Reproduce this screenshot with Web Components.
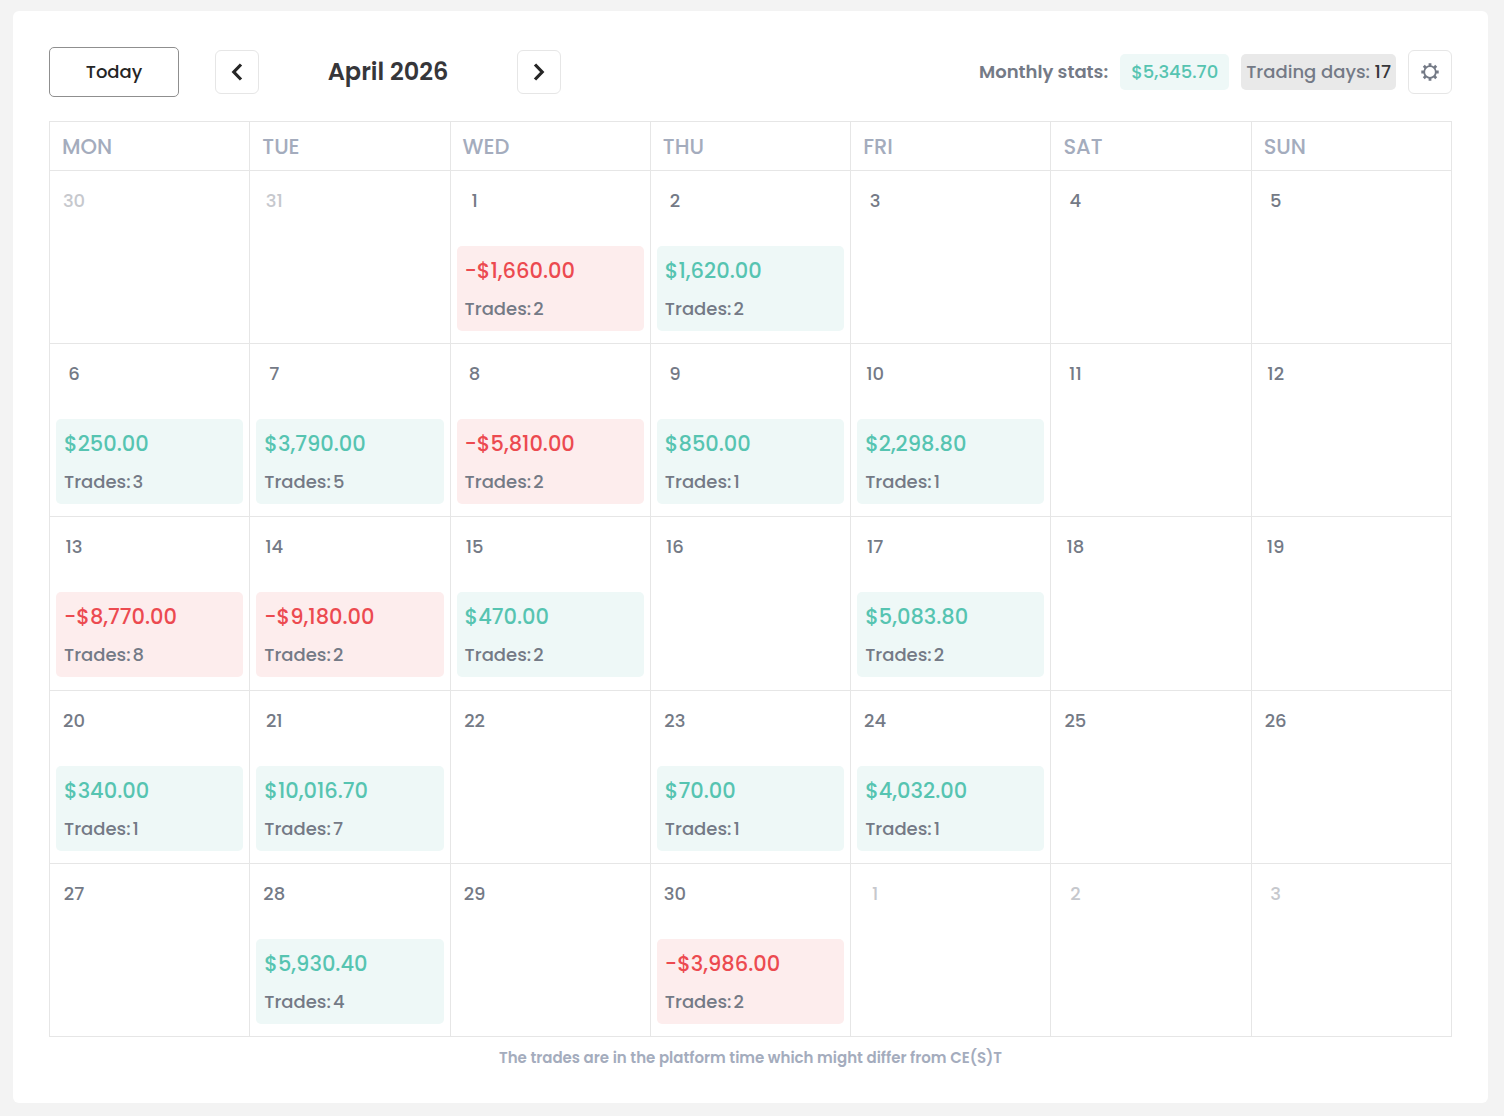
<!DOCTYPE html>
<html lang="en">
<head>
<meta charset="utf-8">
<meta name="viewport" content="width=device-width, initial-scale=1">
<title>Trading calendar</title>
<style>
  body { margin: 0; background: #f3f3f3; color: #747a86; font: 500 18px/24px Poppins, Inter, "Open Sans", sans-serif; }
</style>
</head>
<body>
<trading-calendar>
  <calendar-toolbar slot="toolbar">
    <outline-button slot="today">Today</outline-button>
    <icon-button slot="prev" label="Previous month"><svg width="12" height="18" viewBox="0 0 12 18" fill="none" stroke="#262626" stroke-width="3.2"><path d="M10 1.5 2.8 9 10 16.5"/></svg></icon-button>
    <span slot="month">April 2026</span>
    <icon-button slot="next" label="Next month"><svg width="12" height="18" viewBox="0 0 12 18" fill="none" stroke="#262626" stroke-width="3.2"><path d="M2 1.5 9.2 9 2 16.5"/></svg></icon-button>
    <stat-pill slot="stats" tone="gain">$5,345.70</stat-pill>
    <stat-pill slot="stats">Trading days: <b>17</b></stat-pill>
    <icon-button slot="settings" label="Settings"><svg width="18" height="18" viewBox="0 0 18 18" fill="none" stroke="#747a86"><circle cx="9" cy="9" r="5.8" stroke-width="1.8"/><path stroke-width="2.8" d="M9 .3v2.9M9 14.8v2.9M.3 9h2.900M14.8 9h2.900M2.800 2.800l2.100 2.100M13.1 13.1 15.200 15.200M15.200 2.800l-2.100 2.100M4.9 13.1 2.800 15.200"/></svg></icon-button>
  </calendar-toolbar>
  <month-grid></month-grid>
  <span slot="note">The trades are in the platform time which might differ from CE(S)T</span>
</trading-calendar>

<script>
const define = (name, html, setup) => {
  const template = document.createElement('template');
  template.innerHTML = html;
  customElements.define(name, class extends HTMLElement {
    connectedCallback() {
      if (this.shadowRoot) return;
      this.attachShadow({ mode: 'open' }).append(template.content.cloneNode(true));
      if (setup) setup(this, this.shadowRoot);
    }
  });
};

define('trading-calendar', `
<style>
  :host { display: block; padding: 11px 16px 13px 13px; }
  main { background: #fff; border-radius: 6px; padding: 36px 36px 34px; }
  footer { padding-top: 10px; text-align: center; color: #a4acbd; font-size: 15px; font-weight: 600; line-height: 22px; }
</style>
<main><slot name="toolbar"></slot><slot></slot><footer><slot name="note"></slot></footer></main>`);

define('calendar-toolbar', `
<style>
  :host { display: flex; align-items: center; justify-content: space-between; height: 50px; margin-bottom: 24px; }
  nav { display: flex; align-items: center; gap: 36px; }
  .month { display: flex; align-items: center; }
  h1 { box-sizing: border-box; width: 258px; margin: 0; text-align: center; color: #36363a; font-size: 24px; font-weight: 600; line-height: 32px; }
  .stats { display: flex; align-items: center; gap: 12px; }
  strong { font-weight: 600; }
</style>
<nav>
  <slot name="today"></slot>
  <div class="month"><slot name="prev"></slot><h1><slot name="month"></slot></h1><slot name="next"></slot></div>
</nav>
<div class="stats"><strong>Monthly stats:</strong><slot name="stats"></slot><slot name="settings"></slot></div>`);

define('outline-button', `
<style>
  :host { display: block; }
  button { width: 130px; height: 50px; padding: 0; border: 1px solid #8f8f8f; border-radius: 5px; background: #fff; color: #262626; font: inherit; cursor: pointer; }
</style>
<button type="button"><slot></slot></button>`);

define('icon-button', `
<style>
  :host { display: block; }
  button { display: flex; align-items: center; justify-content: center; width: 44px; height: 44px; padding: 0; border: 1px solid #e6e6e6; border-radius: 6px; background: #fff; cursor: pointer; }
</style>
<button type="button"><slot></slot></button>`, (host, root) => {
  root.querySelector('button').setAttribute('aria-label', host.getAttribute('label'));
});

define('stat-pill', `
<style>
  :host { display: block; box-sizing: border-box; padding: 6px 5px; border-radius: 5px; background: #e9e9e9; white-space: nowrap; font-weight: 500; }
  :host([tone=gain]) { padding: 6px 11px; background: #eef8f7; color: #56c4b1; }
  ::slotted(b) { color: #36363a; font-weight: 500; }
</style>
<slot></slot>`);

define('trade-result', `
<style>
  :host { display: flex; flex-direction: column; gap: 11px; padding: 10px 8px; border-radius: 5px; background: #eef8f7; }
  :host([tone=loss]) { background: #fdeded; }
  .amount { color: #56c4b1; font-size: 21px; line-height: 30px; }
  :host([tone=loss]) .amount { color: #ec4a50; }
  .trades { display: flex; gap: 2px; }
</style>
<div class="amount"><slot></slot></div>
<div class="trades"><span>Trades:</span><slot name="count"></slot></div>`);

define('day-cell', `
<style>
  :host { display: flex; flex-direction: column; gap: 33px; padding: 18px 6px 12px; }
  time { width: 24px; margin-left: 6px; text-align: center; }
  :host([outside]) time { color: #c6c8cd; }
</style>
<time><slot name="day"></slot></time><slot></slot>`);

const weeks = [
  [[30, 'out'], [31, 'out'], [1, '-$1,660.00', 2], [2, '$1,620.00', 2], [3], [4], [5]],
  [[6, '$250.00', 3], [7, '$3,790.00', 5], [8, '-$5,810.00', 2], [9, '$850.00', 1], [10, '$2,298.80', 1], [11], [12]],
  [[13, '-$8,770.00', 8], [14, '-$9,180.00', 2], [15, '$470.00', 2], [16], [17, '$5,083.80', 2], [18], [19]],
  [[20, '$340.00', 1], [21, '$10,016.70', 7], [22], [23, '$70.00', 1], [24, '$4,032.00', 1], [25], [26]],
  [[27], [28, '$5,930.40', 4], [29], [30, '-$3,986.00', 2], [1, 'out'], [2, 'out'], [3, 'out']]
];

define('month-grid', `
<style>
  :host { display: block; }
  table { width: 100%; height: calc(100vh - 200px); border-collapse: collapse; table-layout: fixed; }
  th, td { border: 1px solid #e6e6e6; padding: 0; }
  th { height: 46px; padding: 2px 0 0 12px; text-align: left; color: #a4acbd; font-size: 21px; font-weight: 500; }
  td { height: 172px; vertical-align: top; }
</style>
<table>
  <thead><tr><th>MON</th><th>TUE</th><th>WED</th><th>THU</th><th>FRI</th><th>SAT</th><th>SUN</th></tr></thead>
  <tbody></tbody>
</table>`, (host, root) => {
  const cell = ([day, amount, count]) => {
    const outside = amount === 'out';
    const result = amount && !outside
      ? `<trade-result tone="${amount[0] === '-' ? 'loss' : 'gain'}">${amount}<span slot="count">${count}</span></trade-result>` : '';
    return `<td><day-cell${outside ? ' outside' : ''}><span slot="day">${day}</span>${result}</day-cell></td>`;
  };
  root.querySelector('tbody').innerHTML = weeks.map(w => `<tr>${w.map(cell).join('')}</tr>`).join('');
});
</script>
</body>
</html>
